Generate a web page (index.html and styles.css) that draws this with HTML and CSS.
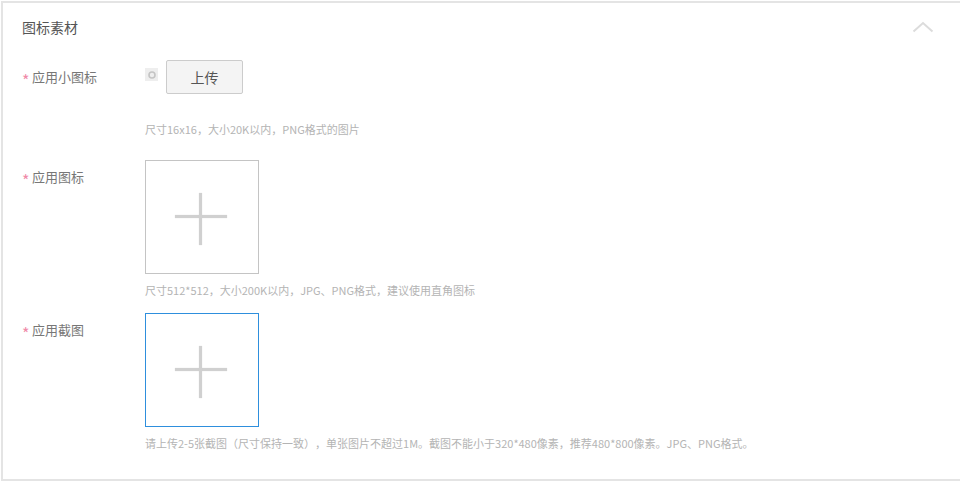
FILE: index.html
```html
<!DOCTYPE html>
<html lang="zh-CN">
<head>
<meta charset="utf-8">
<title>图标素材</title>
<link rel="stylesheet" href="styles.css">
</head>
<body>
<section class="panel">
  <header class="head">
    <h2 class="title">图标素材</h2>
    <svg class="chevron" width="22" height="12" viewBox="0 0 22 12"><path d="M1.500 10.500 11 2l9.500 8.500" fill="none" stroke="#dcdcdc" stroke-width="2"/></svg>
  </header>
  <div class="row row-small">
    <div class="label"><span class="star">*</span>应用小图标</div>
    <div class="field">
      <div class="upload-line">
        <div class="mini-icon"><svg width="8" height="8" viewBox="0 0 8 8"><circle cx="4" cy="4" r="3" fill="none" stroke="#c4c4c4" stroke-width="1.600"/></svg></div>
        <button class="btn" type="button">上传</button>
      </div>
      <p class="hint hint-small">尺寸16x16，大小20K以内，PNG格式的图片</p>
    </div>
  </div>
  <div class="row row-icon">
    <div class="label"><span class="star">*</span>应用图标</div>
    <div class="field">
      <div class="box"><span class="plus"></span></div>
      <p class="hint">尺寸512*512，大小200K以内，JPG、PNG格式，建议使用直角图标</p>
    </div>
  </div>
  <div class="row row-shot">
    <div class="label"><span class="star">*</span>应用截图</div>
    <div class="field">
      <div class="box box-active"><span class="plus"></span></div>
      <p class="hint">请上传2-5张截图（尺寸保持一致），单张图片不超过1M。截图不能小于320*480像素，推荐480*800像素。JPG、PNG格式。</p>
    </div>
  </div>
</section>
</body>
</html>
```
FILE: styles.css
```css
* { box-sizing: border-box; }
html, body { margin: 0; padding: 0; background: #fff; overflow: hidden; }
body {
  width: 960px;
  height: 483px;
  font-family: "Noto Sans CJK SC", "Liberation Sans", sans-serif;
  text-spacing-trim: space-all;
  padding: 1px 0 0 1px;
}
.panel {
  width: 970px;
  height: 480px;
  border: 2px solid #e4e4e4;
  padding: 0 0 0 19px;
}
.head {
  display: flex;
  align-items: center;
  justify-content: space-between;
  height: 49px;
  padding-right: 35px;
}
.title {
  margin: 0;
  font-size: 14px;
  font-weight: 400;
  color: #555;
  line-height: 49px;
}
.chevron { display: block; margin-top: -2px; }
.row { display: flex; }
.label {
  width: 123px;
  flex: none;
  font-size: 13px;
  line-height: 20px;
  color: #777;
}
.star { color: #f08aa8; display: inline-block; width: 10px; font-size: 16px; line-height: 14px; vertical-align: -5px; }
.field { flex: 1; }
.row-small { padding-top: 8px; height: 108px; }
.row-small .label { padding-top: 7px; }
.upload-line { display: flex; align-items: flex-start; gap: 8px; }
.mini-icon {
  width: 13px;
  height: 13px;
  margin-top: 8px;
  background: #eee;
  display: flex;
  align-items: center;
  justify-content: center;
}
.mini-icon svg { display: block; }
.btn {
  width: 77px;
  height: 34px;
  padding: 0;
  border: 1px solid #ccc;
  border-radius: 2px;
  background: #f4f4f4;
  color: #555;
  font: 14px "Noto Sans CJK SC", sans-serif;
}
.hint {
  margin: 0;
  font-size: 11px;
  line-height: 16px;
  color: #b4b4b4;
  white-space: nowrap;
}
.hint-small { margin-top: 27px; }
.row-icon { height: 153px; }
.row-icon .label { padding-top: 7px; }
.row-shot .label { padding-top: 7px; }
.box {
  position: relative;
  width: 114px;
  height: 114px;
  border: 1px solid #c4c4c4;
  margin-bottom: 8px;
}
.box-active { border-color: #2e8fdd; }
.plus { position: absolute; left: 29px; top: 32px; width: 52px; height: 52px; }
.plus::before, .plus::after { content: ""; position: absolute; background: #d0d0d0; box-shadow: 0 0 1px #c8c8c8; }
.plus::before { left: 0; right: 0; top: 22px; height: 3px; }
.plus::after { top: 0; bottom: 0; left: 24px; width: 3px; }
```
